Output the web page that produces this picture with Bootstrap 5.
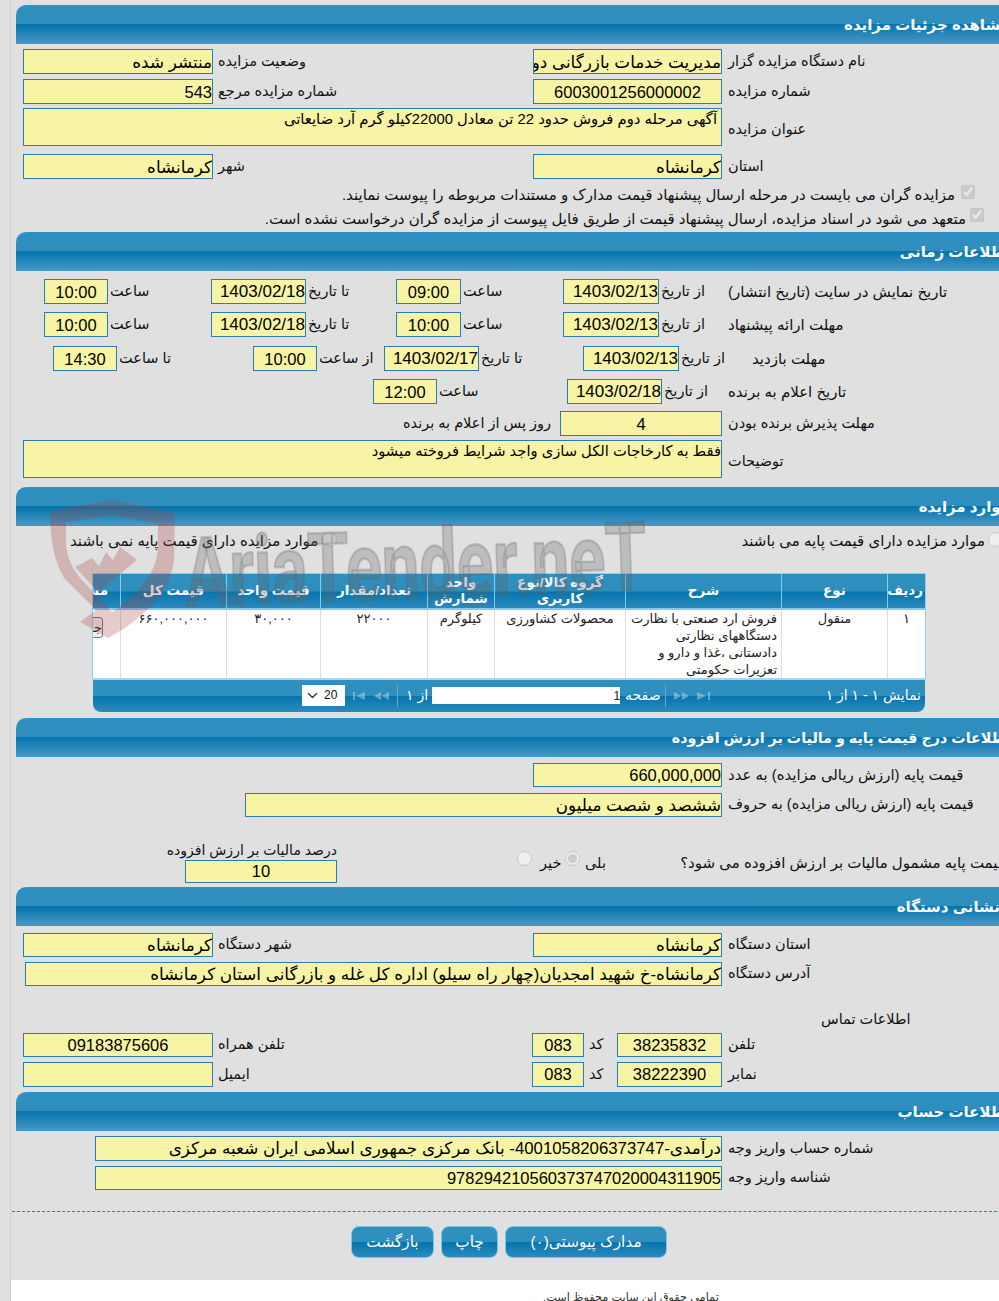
<!DOCTYPE html>
<html lang="fa">
<head>
<meta charset="utf-8">
<title>مشاهده جزئیات مزایده</title>
<link href="https://cdn.jsdelivr.net/npm/bootstrap@5.3.0/dist/css/bootstrap.min.css" rel="stylesheet">
<style>
html,body{height:1301px;overflow:hidden;margin:0}
body{background:#e0e0e0;color:#111;font-family:"Liberation Sans","DejaVu Sans",sans-serif;font-size:14.5px;position:relative}
.sheet{margin-left:10px;border-left:1px solid #cfcfcf;width:1040px;height:1301px;overflow:hidden}
.inner{margin-left:5px;width:1024px}
.sec{height:39px;border-top:1px solid #2a93d6;border-bottom:1px solid #3d9ad6;border-top-left-radius:10px;background:linear-gradient(#2f8fbf 0,#2f8ebc 49%,#0475ad 50%,#4597c6 100%);color:#fff;font-weight:700;font-size:15px;line-height:38px;direction:rtl;padding-right:30px;white-space:nowrap}
.sec.sec-long{font-size:14.3px}
.sec.sec-shift{padding-right:40px}
.fr{display:flex;align-items:center;margin-left:-16px;width:1040px}
.fv.form-control{flex:none;width:auto;min-height:0;height:100%;padding:1px 0 0;border:1px solid #2b7cb3;border-radius:0;background:#f7f5a5;color:#000;font-size:16.5px;line-height:1.1;direction:rtl;box-shadow:none;opacity:1;resize:none;overflow:hidden}
.fv.form-control.tc{text-align:center}
.fv.form-control.fa{font-size:16.8px}
.fv.form-control.dt{font-size:17px}
.fv.form-control.ta{font-size:14.8px;padding:2px 4px 0 0}
.fv.form-control.ta.ta0{padding:2px 0 0 0;font-size:14.7px}
.lb,.lt,.lr,.lq{flex:none;direction:rtl;text-align:left;white-space:nowrap;padding-top:1px}
.lb{padding-left:5px}.lt{padding-left:2px}.lr{padding-left:6px}.lq{padding-left:0;font-size:15px}
.lr.low{padding-top:6px}
.lr.wide{font-size:14.9px}
.cb{flex:none;margin:0;width:14px;height:14px;align-self:flex-start}
.rd{flex:none;margin:0;width:15px;height:15px}
.rd-top{align-self:flex-start;margin-top:0}
.tblwrap{margin-left:76px;width:833px}
.gridt.table{table-layout:fixed;width:833px;margin:0;direction:rtl;border:1px solid #8fd0ef;font-size:13px}
.gridt th{height:35px;padding:0 2px;background:linear-gradient(#2f8fbf 0,#2f8ebc 49%,#0475ad 50%,#2d8abc 100%);color:#fff;font-size:13.5px;font-weight:700;line-height:16px;text-align:center;vertical-align:middle;border-bottom:2px solid #7ccdf0;border-left:1px solid #7ccdf0;box-shadow:none}
.gridt td{height:70px;padding:0 2px;line-height:17px;text-align:center;vertical-align:top;background:#fff;color:#222;border-left:1px solid #ddd;border-bottom:2px solid #aad4ec;box-shadow:none}
.gridt td.ds{text-align:right;padding-right:4px}
.gridt .cl{overflow:hidden;white-space:nowrap;padding:0 12px 0 0;text-align:right;border-left:0}
.c38{width:38px}.c106{width:106px}.c156{width:156px}.c131{width:131px}.c67{width:67px}.c107{width:107px}.c94{width:94px}.c28{width:28px}
.cutbtn{display:block;margin:7px 5px 0 0;width:15px;height:21px;border:1px solid #777;border-radius:3px;background:#f0f0f0;overflow:hidden;font-size:13px;line-height:20px}
.pager{height:32px;margin-left:1px;width:832px;border-radius:0 0 8px 8px;background:linear-gradient(#2f8fbf 0,#2f8ebc 49%,#0475ad 50%,#2d8abc 100%);display:flex;align-items:center;color:#fff;font-size:14px}
.pager .tx{flex:none;direction:rtl;white-space:nowrap}
.pager .form-select{flex:none;width:43px;height:21px;padding:0 6px 0 22px;margin-left:209px;border:0;border-radius:0;font-size:12px;line-height:21px;background-color:#fff;background-position:left 4px center;background-size:13px 11px;color:#111}
.pager .form-control{flex:none;width:188px;height:17px;min-height:0;padding:0;border:0;border-radius:0;direction:rtl;font-size:12px;margin:0 5px 0 4px}
.pic{flex:none;opacity:.35}
.psep{flex:none;width:1px;height:22px;background:#6aa9c9}
.dash{border-top:1px dashed #2b7cb3;margin-left:-4px;width:1040px}
.bt-blue.btn{flex:none;height:32px;padding:0;border:1px solid #72c6ee;border-radius:8px;background:linear-gradient(#2f8fbf 0,#2f8ebc 49%,#0475ad 50%,#2d8abc 100%);color:#fff;font-size:15.3px;direction:rtl;line-height:30px}
.btns{margin-left:335px;gap:7px}
.foot{background:#fff;height:21px;margin-left:-16px;width:1040px;text-align:left;padding-left:543px;direction:ltr;font-size:11.3px;line-height:34px;color:#333;white-space:nowrap;overflow:hidden}
.foot span{direction:rtl;display:inline-block}
.mark-over{position:absolute;left:0;top:0;width:999px;height:700px;pointer-events:none}
.h24{height:24px}.h25{height:25px}.h38{height:38px}.h20{height:20px}.h22{height:22px}.h18{height:18px}.h16{height:16px}.h41{height:41px}
.g2{margin-top:2px}.g3{margin-top:3px}.g4{margin-top:4px}.g5{margin-top:5px}.g6{margin-top:6px}.g7{margin-top:7px}.g8{margin-top:8px}.g9{margin-top:9px}.g14{margin-top:14px}.g21{margin-top:21px}.g22{margin-top:22px}.g23{margin-top:23px}.g25{margin-top:25px}.g26{margin-top:26px}
.m23{margin-left:23px}.m25{margin-left:25px}.m44{margin-left:44px}.m53{margin-left:53px}.m95{margin-left:95px}.m245{margin-left:245px}.m373{margin-left:373px}.m398{margin-left:398px}.m533{margin-left:533px}.m816{margin-left:816px}.m70{margin-left:70px}
.w3{width:3px}.w33{width:33px}.w52{width:52px}.w57{width:57px}.w64{width:64px}.w65{width:65px}.w66{width:66px}.w67{width:67px}.w69{width:69px}.w73{width:73px}.w83{width:83px}.w90{width:90px}.w95{width:95px}.w96{width:96px}.w102{width:102px}.w103{width:103px}.w104{width:104px}.w105{width:105px}.w130{width:130px}.w136{width:136px}.w162{width:162px}.w180{width:180px}.w189{width:189px}.w190{width:190px}.w243{width:243px}.w252{width:252px}.w300{width:300px}.w319{width:319px}.w320{width:320px}.w405{width:405px}.w477{width:477px}.w627{width:627px}.w697{width:697px}.w699{width:699px}
.fv.form-control.w52{width:52px}.fv.form-control.w64{width:64px}.fv.form-control.w65{width:65px}.fv.form-control.w95{width:95px}.fv.form-control.w96{width:96px}.fv.form-control.w105{width:105px}.fv.form-control.w162{width:162px}.fv.form-control.w189{width:189px}.fv.form-control.w190{width:190px}.fv.form-control.w477{width:477px}.fv.form-control.w627{width:627px}.fv.form-control.w697{width:697px}.fv.form-control.w699{width:699px}
.sp{flex:none}
.chk1{width:1000px;justify-content:flex-end;padding-right:25px;gap:6px}
.chk2{width:1000px;justify-content:flex-end;padding-right:16px;gap:4px}
.chktx{direction:rtl;white-space:nowrap;font-size:15px}
.taxcol{flex:none;width:337px;height:41px;display:flex;flex-direction:column;align-items:flex-end}
.taxlab{direction:rtl;height:18px;line-height:17px;font-size:14px;white-space:nowrap}
.fv.form-control.taxin{width:152px;height:23px;flex:none}
.tail{align-self:flex-start;margin-top:10px;line-height:20px}
.tpad{padding-left:8px}
.rdtail{align-self:flex-start;margin-top:9px}
</style>
</head>
<body>
<div class="sheet"><div class="inner">
  <div class="sec g5">مشاهده جزئیات مزایده</div>
  <div class="fr h25 g5"><input readonly class="form-control fv fa m23 w190" value="منتشر شده"><span class="lb w320">وضعیت مزایده</span><input readonly class="form-control fv fa w189" value="مدیریت خدمات بازرگانی دولت"><span class="lr w300">نام دستگاه مزایده گزار</span></div>
  <div class="fr h25 g5"><input readonly class="form-control fv m23 w190" value="543"><span class="lb w320">شماره مزایده مرجع</span><input readonly class="form-control fv tc w189" value="6003001256000002"><span class="lr w300">شماره مزایده</span></div>
  <div class="fr h38 g4"><textarea readonly class="form-control fv ta m23 w699">آگهی مرحله دوم فروش حدود 22 تن معادل 22000کیلو گرم آرد ضایعاتی</textarea><span class="lr low w300">عنوان مزایده</span></div>
  <div class="fr h25 g8"><input readonly class="form-control fv fa m23 w190" value="کرمانشاه"><span class="lb w320">شهر</span><input readonly class="form-control fv fa w189" value="کرمانشاه"><span class="lr w300">استان</span></div>
  <div class="fr h20 g6 chk1"><span class="chktx">مزایده گران می بایست در مرحله ارسال پیشنهاد قیمت مدارک و مستندات مربوطه را پیوست نمایند.</span><input class="cb" type="checkbox" checked disabled></div>
  <div class="fr h22 g3 chk2"><span class="chktx">متعهد می شود در اسناد مزایده، ارسال پیشنهاد قیمت از طریق فایل پیوست از مزایده گران درخواست نشده است.</span><input class="cb" type="checkbox" checked disabled></div>

  <div class="sec g2">اطلاعات زمانی</div>
  <div class="fr h25 g8"><input readonly class="form-control fv tc m44 w64" value="10:00"><span class="lt w103">ساعت</span><input readonly class="form-control fv dt w95" value="1403/02/18"><span class="lt w90">تا تاریخ</span><input readonly class="form-control fv tc w65" value="09:00"><span class="lt w102">ساعت</span><input readonly class="form-control fv dt w96" value="1403/02/13"><span class="lt w69">از تاریخ</span><span class="lq w300">تاریخ نمایش در سایت (تاریخ انتشار)</span></div>
  <div class="fr h25 g8"><input readonly class="form-control fv tc m44 w64" value="10:00"><span class="lt w103">ساعت</span><input readonly class="form-control fv dt w95" value="1403/02/18"><span class="lt w90">تا تاریخ</span><input readonly class="form-control fv tc w65" value="10:00"><span class="lt w102">ساعت</span><input readonly class="form-control fv dt w96" value="1403/02/13"><span class="lt w69">از تاریخ</span><span class="lq w300">مهلت ارائه پیشنهاد</span></div>
  <div class="fr h25 g9"><input readonly class="form-control fv tc m53 w64" value="14:30"><span class="lt w136">تا ساعت</span><input readonly class="form-control fv tc w64" value="10:00"><span class="lt w67">از ساعت</span><input readonly class="form-control fv dt w95" value="1403/02/17"><span class="lt w104">تا تاریخ</span><input readonly class="form-control fv dt w96" value="1403/02/13"><span class="lt w73">از تاریخ</span><span class="lq w300">مهلت بازدید</span></div>
  <div class="fr h25 g8"><input readonly class="form-control fv tc m373 w64" value="12:00"><span class="lt w130">ساعت</span><input readonly class="form-control fv dt w95" value="1403/02/18"><span class="lt w66">از تاریخ</span><span class="lq w300">تاریخ اعلام به برنده</span></div>
  <div class="fr h25 g7"><span class="lb m398 w162">روز پس از اعلام به برنده</span><input readonly class="form-control fv tc w162" value="4"><span class="lr w300">مهلت پذیرش برنده بودن</span></div>
  <div class="fr h38 g4"><textarea readonly class="form-control fv ta ta0 m23 w699">فقط به کارخاجات الکل سازی واجد شرایط فروخته میشود</textarea><span class="lr low w300">توضیحات</span></div>

  <div class="sec g9">موارد مزایده</div>
  <div class="fr h18 g6"><span class="lq m70 w252 chktx">موارد مزایده دارای قیمت پایه نمی باشند</span><input class="rd rd-top" type="radio" name="m1" disabled><span class="sp w405"></span><span class="lq w243 chktx">موارد مزایده دارای قیمت پایه می باشند</span><span class="sp w3"></span><input class="rd rd-top" type="radio" name="m1" disabled></div>
  <div class="g23 tblwrap">
    <table class="table gridt">
      <colgroup><col class="c38"><col class="c106"><col class="c156"><col class="c131"><col class="c67"><col class="c107"><col class="c94"><col class="c106"><col class="c28"></colgroup>
      <thead><tr><th>ردیف</th><th>نوع</th><th>شرح</th><th>گروه کالا/نوع کاربری</th><th>واحد شمارش</th><th>تعداد/مقدار</th><th>قیمت واحد</th><th>قیمت کل</th><th class="cl">مشاهده</th></tr></thead>
      <tbody><tr><td>۱</td><td>منقول</td><td class="ds">فروش ارد صنعتی با نظارت دستگاههای نظارتی دادستانی ،غذا و دارو و تعزیرات حکومتی</td><td>محصولات کشاورزی</td><td>کیلوگرم</td><td>۲۲۰۰۰</td><td>۳۰,۰۰۰</td><td>۶۶۰,۰۰۰,۰۰۰</td><td class="cl"><span class="cutbtn">جزئیات</span></td></tr></tbody>
    </table>
    <div class="pager">
      <select class="form-select"><option>20</option></select>
      <svg class="pic ms-2" width="13" height="8" viewBox="0 0 13 8"><path fill="#fff" d="M0 0h2v8H0zM12 0v8L3 4z"/></svg>
      <svg class="pic ms-2" width="15" height="8" viewBox="0 0 15 8"><path fill="#fff" d="M7 0v8L0 4zM15 0v8L8 4z"/></svg>
      <span class="psep ms-2"></span>
      <span class="tx ms-2">از ۱</span>
      <input readonly class="form-control" value="1">
      <span class="tx">صفحه</span>
      <span class="psep ms-1"></span>
      <svg class="pic ms-2" width="15" height="8" viewBox="0 0 15 8"><path fill="#fff" d="M0 0v8l7-4zM8 0v8l7-4z"/></svg>
      <svg class="pic ms-2" width="13" height="8" viewBox="0 0 13 8"><path fill="#fff" d="M0 0v8l9-4zM11 0h2v8h-2z"/></svg>
      <span class="tx ms-auto me-1">نمایش ۱ - ۱ از ۱</span>
    </div>
  </div>

  <div class="sec sec-long g6">اطلاعات درج قیمت پایه و مالیات بر ارزش افزوده</div>
  <div class="fr h24 g6"><input readonly class="form-control fv m533 w189" value="660,000,000"><span class="lr wide w300">قیمت پایه (ارزش ریالی مزایده) به عدد</span></div>
  <div class="fr h24 g6"><input readonly class="form-control fv fa m245 w477" value="ششصد و شصت میلیون"><span class="lr w300">قیمت پایه (ارزش ریالی مزایده) به حروف</span></div>
  <div class="fr h41 g25">
    <div class="taxcol"><span class="taxlab">درصد مالیات بر ارزش افزوده</span><input readonly class="form-control fv tc taxin" value="10"></div>
    <span class="sp w180"></span>
    <input class="rd rdtail" type="radio" name="m2" disabled>
    <span class="lb tpad tail w33">خیر</span>
    <input class="rd rdtail" type="radio" name="m2" checked disabled>
    <span class="lb tail w105">بلی</span>
    <span class="lq tail w320">قیمت پایه مشمول مالیات بر ارزش افزوده می شود؟</span>
  </div>

  <div class="sec sec-shift g4">نشانی دستگاه</div>
  <div class="fr h24 g7"><input readonly class="form-control fv fa m23 w190" value="کرمانشاه"><span class="lb w320">شهر دستگاه</span><input readonly class="form-control fv fa w189" value="کرمانشاه"><span class="lr w300">استان دستگاه</span></div>
  <div class="fr h24 g5"><input readonly class="form-control fv fa m25 w697" value="کرمانشاه-خ شهید امجدیان(چهار راه سیلو) اداره کل غله و بازرگانی استان کرمانشاه"><span class="lr w300">آدرس دستگاه</span></div>
  <div class="fr h16 g26"><span class="lb m816 w300">اطلاعات تماس</span></div>
  <div class="fr h24 g5"><input readonly class="form-control fv tc m23 w190" value="09183875606"><span class="lb w319">تلفن همراه</span><input readonly class="form-control fv tc w52" value="083"><span class="lb w33">کد</span><input readonly class="form-control fv tc w105" value="38235832"><span class="lr w300">تلفن</span></div>
  <div class="fr h25 g5"><input readonly class="form-control fv tc m23 w190" value=""><span class="lb w319">ایمیل</span><input readonly class="form-control fv tc w52" value="083"><span class="lb w33">کد</span><input readonly class="form-control fv tc w105" value="38222390"><span class="lr w300">نمابر</span></div>

  <div class="sec g5">اطلاعات حساب</div>
  <div class="fr h25 g5"><input readonly class="form-control fv fa m95 w627" value="درآمدی-4001058206373747- بانک مرکزی جمهوری اسلامی ایران شعبه مرکزی"><span class="lr w300">شماره حساب واریز وجه</span></div>
  <div class="fr h24 g5"><input readonly class="form-control fv m95 w627" value="978294210560373747020004311905"><span class="lr w300">شناسه واریز وجه</span></div>
  <div class="dash g21"></div>
  <div class="d-flex btns g14"><button class="btn bt-blue w83" type="button">بازگشت</button><button class="btn bt-blue w57" type="button">چاپ</button><button class="btn bt-blue w162" type="button">مدارک پیوستی(۰)</button></div>
  <div class="foot g22"><span>تمامی حقوق این سایت محفوظ است.</span></div>
</div></div>
<svg class="mark-over" viewBox="0 0 999 700" aria-hidden="true">
  <path fill="#a83c3c" fill-opacity=".27" d="M50 511 112 500 175 513 174 560C170 590 150 610 125 628L108 638 80 622 96 610 64 578C54 560 50 540 50 511ZM66 522V540C66 556 72 570 84 582L112 612C140 592 156 574 158 548V524L112 515Z"/>
  <path fill="#a83c3c" fill-opacity=".27" d="M75 567 92 558 99 566 106 552 113 560 120 547 137 560 98 592Z"/>
  <text x="186" y="606" font-family="Roboto,'Liberation Sans',sans-serif" font-weight="700" font-size="96" fill="#666" fill-opacity=".28" stroke="#666" stroke-opacity=".28" stroke-width="2.5" textLength="462" lengthAdjust="spacingAndGlyphs" transform="rotate(-2 186 606)">AriaTender.neT</text>
</svg>
</body>
</html>
